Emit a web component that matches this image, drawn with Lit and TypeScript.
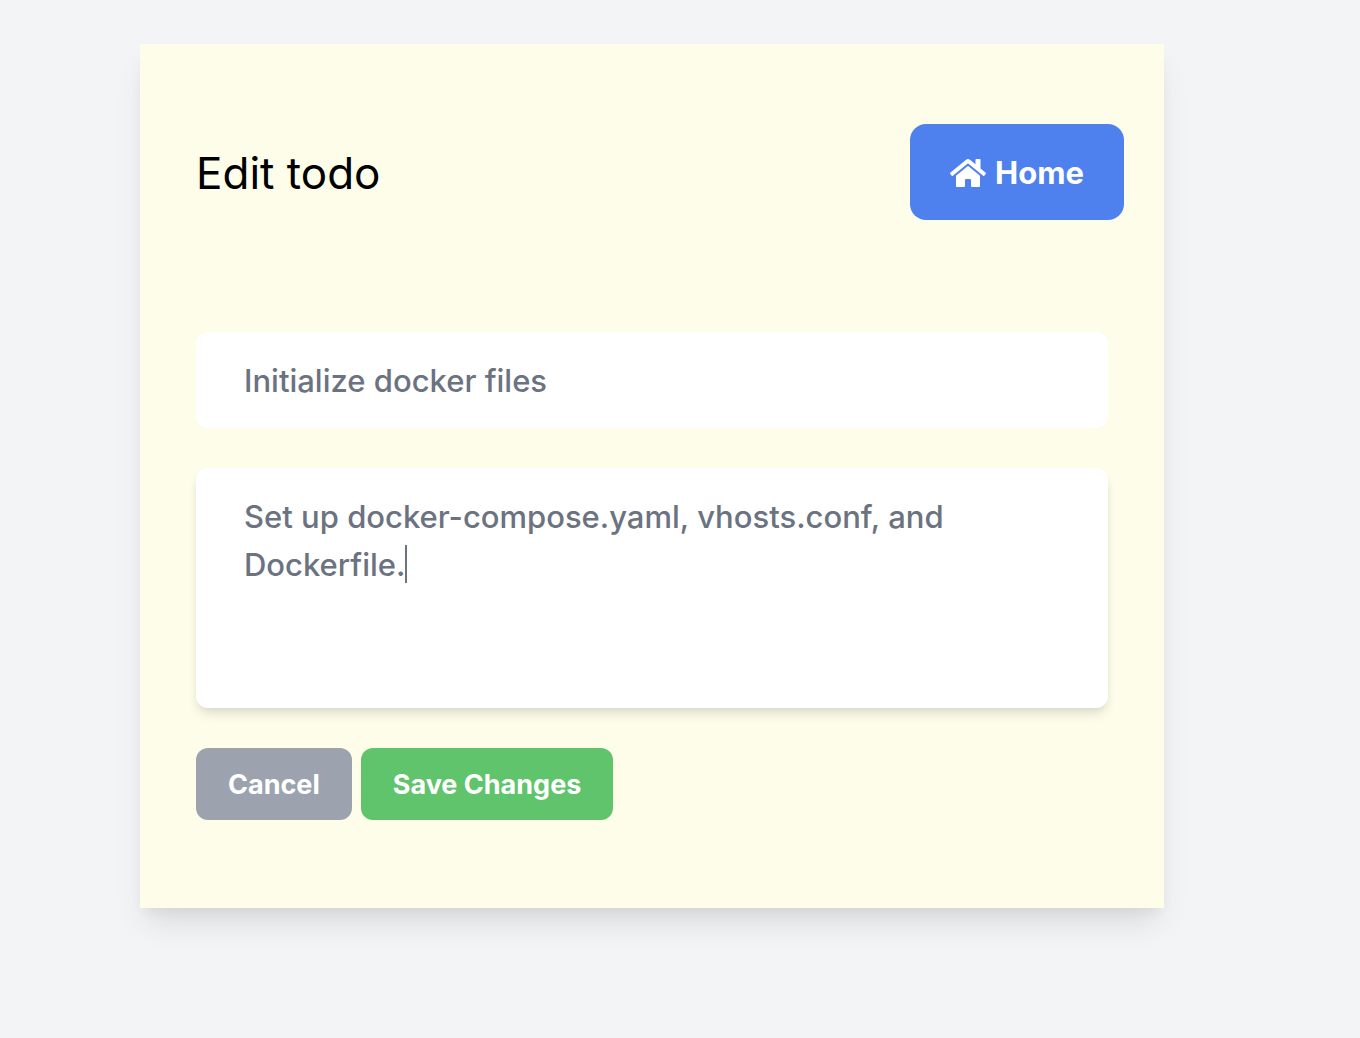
import { LitElement, html, css } from "lit";
import { customElement, state } from "lit/decorators.js";

@customElement("app-root")
export class AppRoot extends LitElement {
  @state() private heading = "Initialize docker files";
  @state() private details =
    "Set up docker-compose.yaml, vhosts.conf, and Dockerfile.";

  static styles = css`
    :host {
      display: block;
      box-sizing: border-box;
      min-height: 100vh;
      padding: 44px 196px 88px 140px;
      background: #f3f4f6;
      font-family: Inter, "Liberation Sans", sans-serif;
    }
    * {
      box-sizing: border-box;
    }
    .card {
      padding: 80px 40px 88px 56px;
      background: #fefdea;
      box-shadow: 0 20px 30px -6px rgba(0, 0, 0, 0.1),
        0 8px 12px -4px rgba(0, 0, 0, 0.05);
    }
    .header {
      display: flex;
      align-items: center;
      justify-content: space-between;
      margin-bottom: 112px;
    }
    .title {
      margin: 0;
      padding-top: 2px;
      font-size: 44px;
      font-weight: 400;
      line-height: 64px;
      color: #000;
    }
    .home {
      display: flex;
      align-items: center;
      gap: 9px;
      padding: 25px 40px 23px;
      border-radius: 16px;
      background: #4f81ee;
      color: #fff;
      font-size: 31px;
      font-weight: 700;
      line-height: 48px;
      text-decoration: none;
    }
    .icon {
      display: block;
      width: 36px;
      height: 32px;
      fill: currentColor;
    }
    .form {
      display: flex;
      flex-direction: column;
      gap: 40px;
      margin-right: 16px;
    }
    .field {
      display: block;
      width: 100%;
      margin: 0;
      padding: 25px 48px 23px;
      border: 0;
      outline: 0;
      border-radius: 12px;
      background: #fff;
      color: #6b7280;
      font-family: inherit;
      font-size: 31px;
      font-weight: 500;
      line-height: 48px;
    }
    .details {
      position: relative;
    }
    .area {
      height: 240px;
      resize: none;
      overflow: hidden;
      box-shadow: 0 8px 12px -2px rgba(0, 0, 0, 0.1),
        0 4px 8px -2px rgba(0, 0, 0, 0.06);
    }
    .caret {
      position: absolute;
      left: 209px;
      top: 77px;
      width: 2px;
      height: 38px;
      background: #6b7280;
      pointer-events: none;
    }
    .details:focus-within .caret {
      display: none;
    }
    .actions {
      display: flex;
      gap: 9px;
    }
    .button {
      margin: 0;
      padding: 17px 32px 15px;
      border: 0;
      border-radius: 12px;
      color: #fff;
      font-family: inherit;
      font-size: 27px;
      font-weight: 700;
      line-height: 40px;
      cursor: pointer;
    }
    .cancel {
      background: #9ca3af;
    }
    .save {
      background: #5fc46b;
    }
  `;

  render() {
    return html`
      <main class="card">
        <header class="header">
          <h1 class="title">Edit todo</h1>
          <a class="home" href="#home">
            <svg class="icon" viewBox="0 0 576 512" aria-hidden="true">
              <path
                d="M280.37 148.26L96 300.11V464a16 16 0 0 0 16 16l112.06-.29a16 16 0 0 0 15.92-16V368a16 16 0 0 1 16-16h64a16 16 0 0 1 16 16v95.64a16 16 0 0 0 16 16.05L464 480a16 16 0 0 0 16-16V300L295.67 148.26a12.19 12.19 0 0 0-15.3 0zM571.6 251.47L488 182.56V44.05a12 12 0 0 0-12-12h-56a12 12 0 0 0-12 12v72.61L318.47 43a48 48 0 0 0-61 0L4.34 251.47a12 12 0 0 0-1.6 16.9l25.5 31A12 12 0 0 0 45.15 301l235.22-193.74a12.19 12.19 0 0 1 15.3 0L530.9 301a12 12 0 0 0 16.9-1.6l25.5-31a12 12 0 0 0-1.7-16.93z"
              />
            </svg>
            <span>Home</span>
          </a>
        </header>
        <form class="form" @submit=${(e: Event) => e.preventDefault()}>
          <input
            class="field"
            type="text"
            name="title"
            aria-label="Title"
            .value=${this.heading}
            @input=${(e: Event) =>
              (this.heading = (e.target as HTMLInputElement).value)}
          />
          <div class="details">
            <textarea
              class="field area"
              name="details"
              aria-label="Description"
              spellcheck="false"
              .value=${this.details}
              @input=${(e: Event) =>
                (this.details = (e.target as HTMLTextAreaElement).value)}
            ></textarea>
            <span class="caret"></span>
          </div>
          <div class="actions">
            <button class="button cancel" type="button">Cancel</button>
            <button class="button save" type="submit">Save Changes</button>
          </div>
        </form>
      </main>
    `;
  }
}
